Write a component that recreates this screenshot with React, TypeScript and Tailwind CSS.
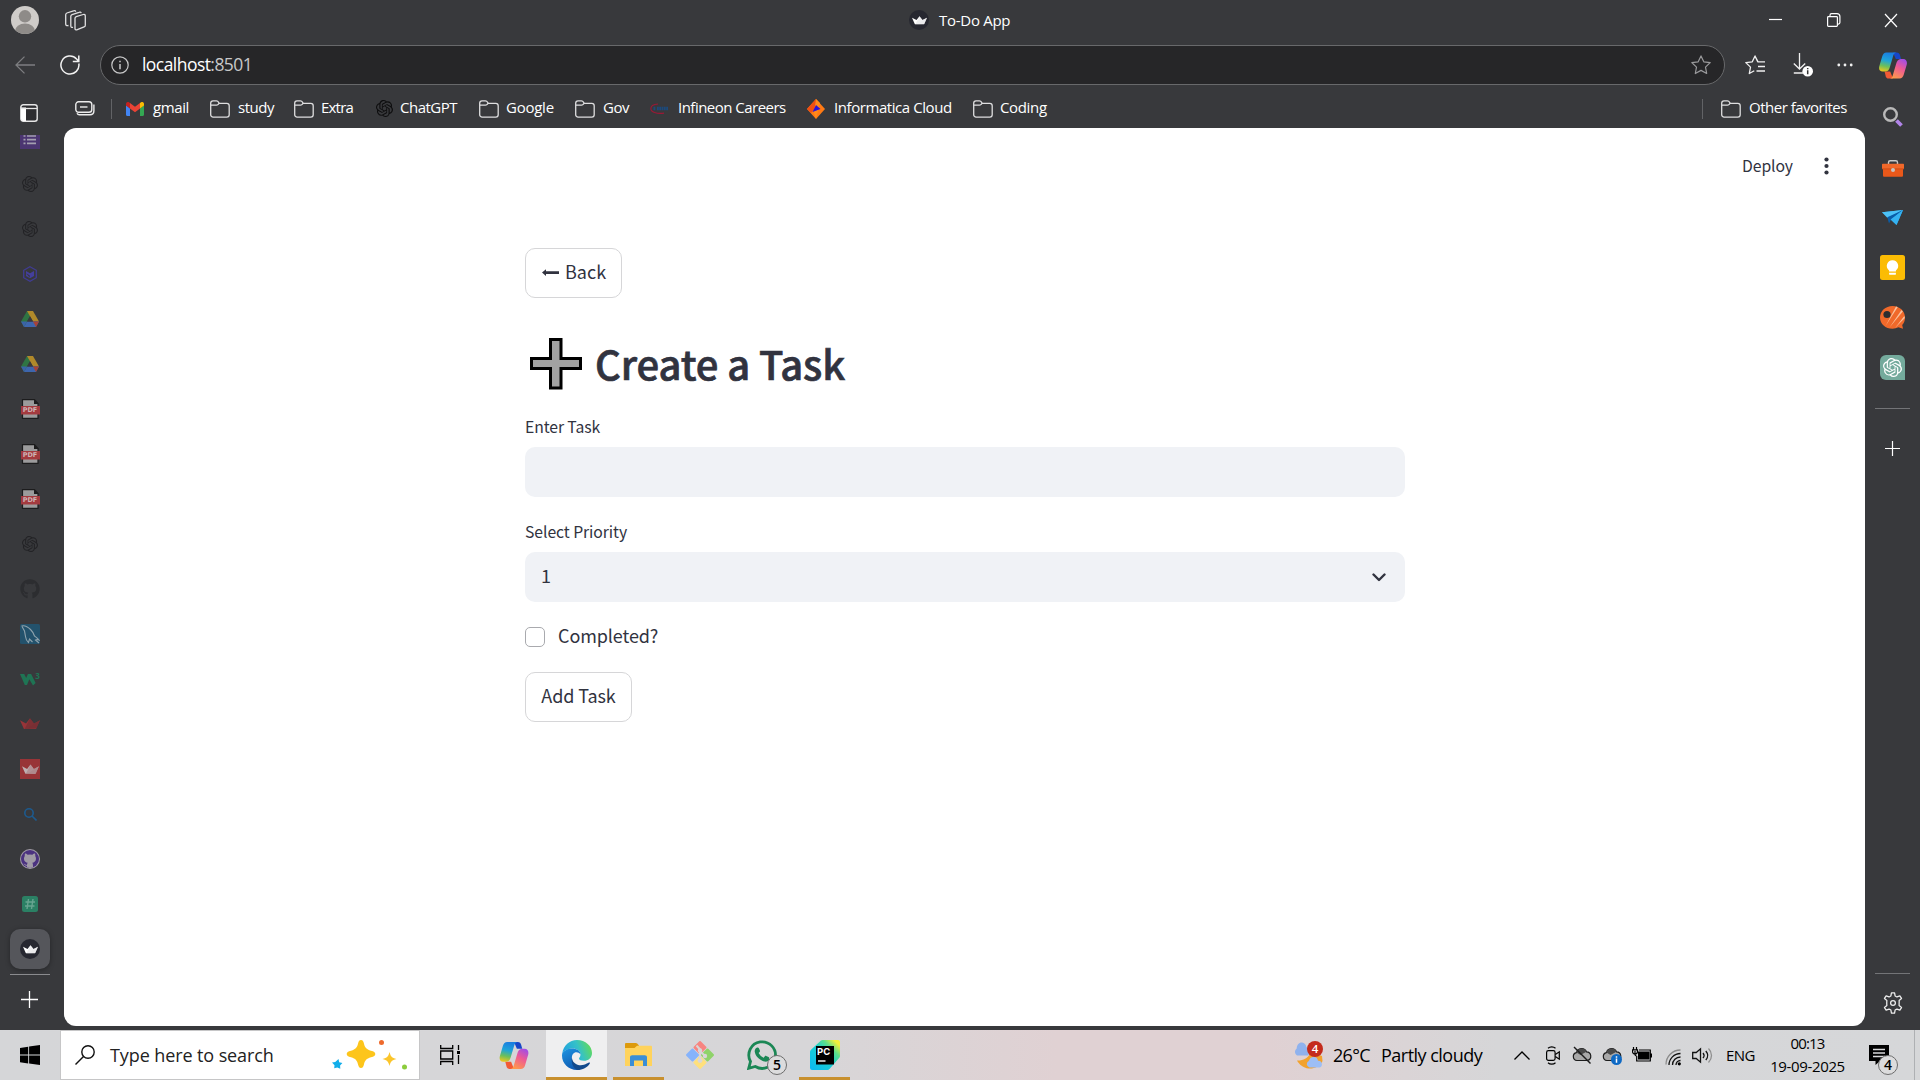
import type { ReactNode } from "react";
import { SiOpenai } from "react-icons/si";
import { FaGithub } from "react-icons/fa";

type IconProps = { className?: string };

/* ---------- shared icons ---------- */

const Folder = ({ className = "" }: IconProps) => (
  <svg className={"shrink-0 " + className} width="20" height="18" viewBox="0 0 20 18" fill="none" stroke="#dededf" strokeWidth="1.3">
    <path d="M.7 3.2A2.4 2.4 0 0 1 3 .8h3.4c.6 0 1 .2 1.4.6l1.6 1.9h7.4a2.4 2.4 0 0 1 2.4 2.4v9a2.4 2.4 0 0 1-2.4 2.4H3.1a2.4 2.4 0 0 1-2.4-2.4z" />
    <path d="M.8 5.2h5.6c.6 0 1.100-.2 1.500-.6l1.300-1.300" />
  </svg>
);

const Crown = ({ className = "", fill = "#fff", shade = "#d8d8dc" }: IconProps & { fill?: string; shade?: string }) => (
  <svg className={className} viewBox="0 0 20 12">
    <path d="M0 2.200 6 5.400 10 .2l4 5.200 6-3.100-3.700 8.200a1 1 0 0 1-.9.600H4.600a1 1 0 0 1-.9-.6z" fill={fill} />
    <path d="m10 .2 4 5.200-7.400 5.700H4.600z" fill={shade} opacity=".45" />
    <path d="m14 5.400 6-3.100-3.700 8.200-9.700.6z" fill={shade} opacity=".55" />
  </svg>
);

const Copilot = ({ className = "", id }: IconProps & { id: string }) => (
  <svg className={className} viewBox="0 0 30 28">
    <defs>
      <linearGradient id={id + "a"} x1=".4" y1="0" x2=".2" y2="1">
        <stop offset="0" stopColor="#1b7fe0" />
        <stop offset=".4" stopColor="#1fa5d8" />
        <stop offset=".7" stopColor="#6cbf5a" />
        <stop offset="1" stopColor="#f4c81a" />
      </linearGradient>
      <linearGradient id={id + "b"} x1=".8" y1="0" x2=".3" y2="1">
        <stop offset="0" stopColor="#a04de8" />
        <stop offset=".45" stopColor="#ee5a94" />
        <stop offset="1" stopColor="#ff9a4a" />
      </linearGradient>
    </defs>
    <path d="M15 0h4c2 0 2.800 1 3.300 2.600L23.600 7H18z" fill="#1746c8" />
    <path d="M15 28h-4.500c-2 0-2.800-1-3.300-2.600L6 20.500h6z" fill="#f25a35" />
    <path d="M8 0h10.500c-2 .4-2.700 1.800-3.200 3.400l-3.700 12.500c-.8 2.800-2 4.600-5 4.600H4c-3.400 0-4.600-2.700-3.600-6L3.500 4C4.300 1.400 5.600 0 8 0z" fill={`url(#${id}a)`} />
    <path d="M22 28H11.500c2-.4 2.700-1.800 3.200-3.400l3.700-12.500c.8-2.800 2-5.100 5-5.100H26c3.400 0 4.600 3.200 3.600 6.500L26.500 24c-.8 2.600-2.100 4-4.500 4z" fill={`url(#${id}b)`} />
  </svg>
);

/* ---------- title bar and toolbar ---------- */

const TitleBar = () => (
  <div className="flex h-10 shrink-0 items-center">
    <svg className="ml-[11px] size-7" viewBox="0 0 28 28">
      <clipPath id="av"><circle cx="14" cy="14" r="14" /></clipPath>
      <g clipPath="url(#av)">
        <rect width="28" height="28" fill="#cfccc9" />
        <circle cx="14" cy="10.300" r="6.200" fill="#8e8b88" />
        <ellipse cx="14" cy="25" rx="10" ry="7.500" fill="#8e8b88" />
      </g>
    </svg>
    <svg className="ml-[26px] size-[21px]" viewBox="0 0 21 21" fill="none" stroke="#e0e0e1" strokeWidth="1.300" strokeLinejoin="round">
      <path d="M10 8.300c0-.9.400-1.400 1.200-1.700l7-2.100c1.300-.4 2.100.2 2.100 1.400v9.300c0 .9-.4 1.400-1.200 1.700l-6.800 2.800c-1.400.5-2.300 0-2.300-1.300z" />
      <path d="M8 17.300c-1.500.4-2.200-.2-2.200-1.300V6.300c0-.9.400-1.400 1.200-1.700l7-2.300c1.100-.4 1.900-.1 2.200.8" />
      <path d="M3.500 15.500C1.500 16 .7 15.200.7 14V4.700c0-.9.400-1.400 1.200-1.700L8.500.9c1.100-.4 1.900-.1 2.300.7" />
    </svg>
    <div className="ml-[823px] flex size-5 items-center justify-center rounded-full bg-[#262730]">
      <Crown className="h-[9px] w-[15px]" />
    </div>
    <span className="ml-[10px] w-[71px] whitespace-nowrap text-[15px] tracking-[-0.28px]">To-Do App</span>
    <svg className="ml-[759px] h-[15px] w-[129px] shrink-0" viewBox="0 0 129 15" fill="none" stroke="#fff" strokeWidth="1.200">
      <path d="M0 6.500h13" />
      <rect x="58.600" y="3.600" width="9.800" height="9.800" rx=".8" />
      <path d="M61 3.500V2.200c0-1 .5-1.600 1.500-1.600h5.400c2 0 3 1 3 3v6c0 1-.5 1.500-1.500 1.500h-1" />
      <path d="m116 1 12 13M128 1l-12 13" />
    </svg>
  </div>
);

const Toolbar = () => (
  <div className="flex h-[50px] shrink-0 items-center">
    <svg className="ml-[15px] h-[18px] w-5" viewBox="0 0 20 18" fill="none" stroke="#7d7e81" strokeWidth="1.300">
      <path d="M20 9H1M9.500.6 1 9l8.500 8.400" />
    </svg>
    <svg className="ml-[25px] size-5" viewBox="0 0 20 20" fill="none" stroke="#f2f2f2" strokeWidth="1.500">
      <path d="M18.800 8.500A9 9 0 1 1 16.600 4l2 2.200M18.800.5v6h-6" />
    </svg>
    <div className="ml-5 flex h-10 w-[1625px] items-center rounded-full border border-[#68696b] bg-[#262628]">
      <svg className="ml-[10px] size-[18px]" viewBox="0 0 18 18" fill="none" stroke="#c9c9ca" strokeWidth="1.200">
        <circle cx="9" cy="9" r="8.200" />
        <path d="M9 8v5.200M9 4.700v1.600" strokeWidth="1.500" />
      </svg>
      <span className="-mt-[2px] ml-[13px] text-[17.5px] tracking-[-0.55px] text-[#c8c8c9]">
        <span className="text-white">localhost</span>:8501
      </span>
      <svg className="ml-auto mr-[13px] size-5" viewBox="0 0 20 20" fill="none" stroke="#9a9a9c" strokeWidth="1.200" strokeLinejoin="round">
        <path d="m10 .9 2.800 5.900 6.400.8-4.700 4.500 1.200 6.400L10 15.400l-5.700 3.100 1.200-6.400L.8 7.600l6.400-.8z" />
      </svg>
    </div>
    <svg className="ml-[20px] size-5" viewBox="0 0 20 20" fill="none" stroke="#f0f0f0" strokeWidth="1.300" strokeLinejoin="round">
      <path d="M13 6.800 10 1 7.300 6.800.8 7.600l4.700 4.500-1.200 6.400 5-2.700M10 1l2.700 5.800H20M13 11.500h7M11.500 16H20" />
    </svg>
    <svg className="ml-[28px] h-6 w-5" viewBox="0 0 20 24" fill="none" stroke="#f0f0f0" strokeWidth="1.300">
      <path d="M6.500 0v16M.8 10.500 6.500 16l5.700-5.500M.8 20H10" />
      <circle cx="14.700" cy="18.300" r="5.300" fill="#fff" stroke="none" />
      <path d="M14.700 17.300v4M14.700 14.900v1.400" stroke="#333" strokeWidth="1.500" />
    </svg>
    <svg className="ml-6 h-1 w-4" viewBox="0 0 16 4" fill="#f0f0f0">
      <circle cx="1.800" cy="2" r="1.400" /><circle cx="8" cy="2" r="1.400" /><circle cx="14.200" cy="2" r="1.400" />
    </svg>
    <Copilot id="ct" className="ml-[26px] h-[27px] w-7" />
  </div>
);

/* ---------- bookmarks ---------- */

const Bookmark = ({ icon, label, className }: { icon: ReactNode; label: string; className: string }) => (
  <div className={"flex shrink-0 items-center whitespace-nowrap " + className}>
    <span className="flex w-7 items-center">{icon}</span>
    <span className="-mt-[3px]">{label}</span>
  </div>
);

const Bookmarks = () => (
  <div className="flex h-[38px] shrink-0 items-center pb-px pl-[11px] text-[15px]">
    <svg className="h-[15px] w-5" viewBox="0 0 20 15" fill="none" stroke="#ececec" strokeWidth="1.400">
      <rect x=".8" y=".8" width="16" height="10.500" rx="2.800" />
      <path d="M5 6h7.500" />
      <path d="M18.900 3.500v6.300c0 2.600-1.500 4-4 4H4.500c-1.200 0-2-.5-2.500-1.500" />
    </svg>
    <div className="ml-4 h-5 w-px bg-[#626366]" />
    <Bookmark
      className="ml-[14px] w-[84px] tracking-[-0.4px] [&>span:first-child]:w-[27px]"
      label="gmail"
      icon={
        <svg width="18" height="14" viewBox="0 0 18 14">
          <path d="M0 3v9.800C0 13.500.5 14 1.200 14H4V6.500z" fill="#4285f4" />
          <path d="M14 14h2.800c.7 0 1.200-.5 1.200-1.200V3l-4 3.500z" fill="#34a853" />
          <path d="M14 1v5.500L18 3.500V2c0-1.900-2-2.600-3.300-1.600z" fill="#fbbc04" />
          <path d="M4 6.500V1l5 3.800L14 1v5.500l-5 3.800z" fill="#ea4335" />
          <path d="M0 2v1.500l4 3V1L3.300.4C2 -.6 0 .1 0 2z" fill="#c5221f" />
        </svg>
      }
    />
    <Bookmark className="w-[84px] tracking-[-0.48px]" label="study" icon={<Folder />} />
    <Bookmark className="w-[82px] tracking-[-0.8px] [&>span:first-child]:w-[27px]" label="Extra" icon={<Folder />} />
    <Bookmark className="w-[103px] tracking-[-0.5px] [&>span:first-child]:w-[24px]" label="ChatGPT" icon={<SiOpenai className="size-[17px] text-[#0d0d0e]" />} />
    <Bookmark className="w-[96px] tracking-[-0.25px] [&>span:first-child]:w-[27px]" label="Google" icon={<Folder />} />
    <Bookmark className="w-[75px] tracking-[-0.5px]" label="Gov" icon={<Folder />} />
    <Bookmark
      className="w-[156px] tracking-[-0.52px]"
      label="Infineon Careers"
      icon={
        <svg width="20" height="12" viewBox="0 0 20 12" fill="none">
          <path d="M8 1C3 1.400.8 3.500.8 5.700c0 3.200 5.700 5.400 13.200 4.400" stroke="#9b1836" strokeWidth="1.100" />
          <path d="M3.500 5.500h2M7 5.500h11.500" stroke="#1c4a7c" strokeWidth="3.500" strokeDasharray="1.800 .5" />
        </svg>
      }
    />
    <Bookmark
      className="w-[167px] tracking-[-0.43px]"
      label="Informatica Cloud"
      icon={
        <svg width="20" height="20" viewBox="0 0 20 20">
          <path d="M10 0 19 10 10 20 1 10z" fill="#ff7a14" />
          <path d="M10 0 1 10l4 4 5-6z" fill="#f04e12" />
          <path d="m10 0 4 4-4 16-2-6z" fill="#ff8a1c" />
          <path d="m6.500 13 3.500-7 4.500 4z" fill="#2a12d8" />
        </svg>
      }
    />
    <Bookmark className="tracking-[-0.35px] [&>span:first-child]:w-[27px]" label="Coding" icon={<Folder />} />
    <div className="ml-auto h-5 w-px bg-[#626366]" />
    <Bookmark className="ml-[18px] mr-[17px] w-[127px] tracking-[-0.5px]" label="Other favorites" icon={<Folder />} />
  </div>
);

/* ---------- vertical tabs ---------- */

const Drive = () => (
  <svg width="18" height="16" viewBox="0 0 18 16">
    <path d="M6 0h6L6.200 10.500 3 16 0 10.600z" fill="#2f7443" />
    <path d="M6 0h6l6 10.500h-6z" fill="#b0892a" />
    <path d="M0 10.600h5.800L3 16z" fill="#3a63a8" />
    <path d="M5.900 10.500H18L15 16H3z" fill="#3e66ad" />
    <path d="M12 10.500h6L15 16z" fill="#a84237" />
    <path d="m9 5.200 3.100 5.300H5.900z" fill="#39393c" />
  </svg>
);

const Pdf = () => (
  <div className="relative flex h-5 w-[19px] items-center justify-center">
    <svg className="absolute inset-0" width="19" height="20" viewBox="0 0 19 20">
      <path d="M1.500.7h12L17 4.500v14.800H1.500z" fill="#9b9b9c" stroke="#1c1c1d" strokeWidth="1.200" />
      <path d="M13 .2 17.500 5H13z" fill="#1c1c1d" />
      <path d="M0 7h19v8.500H0z" fill="#a33a3f" />
    </svg>
    <span className="relative mt-[3px] font-['DejaVu_Sans'] text-[6.5px] font-bold leading-none text-[#cfb4b6]">PDF</span>
  </div>
);

const GptDim = () => <SiOpenai className="size-4 text-[#232326]" />;

const TABS: ReactNode[] = [
  <GptDim />,
  <GptDim />,
  <svg width="14" height="16" viewBox="0 0 14 16">
    <path d="M7 .7 13.300 4.300v7.400L7 15.300.7 11.700V4.300z" fill="none" stroke="#403c92" strokeWidth="1.300" />
    <path d="m3 5 4 2.200L11 5v5l-4 2.300L3 10z" fill="#443f9c" />
    <path d="m3.500 7.800 3 1.700v1.700M9 5.200l-2 1-2-1 2-1z" fill="#38393c" stroke="#38393c" strokeWidth=".5" />
  </svg>,
  <Drive />,
  <Drive />,
  <Pdf />,
  <Pdf />,
  <Pdf />,
  <GptDim />,
  <FaGithub className="size-5 text-[#2c2d30]" />,
  <svg width="20" height="20" viewBox="0 0 20 20">
    <rect width="20" height="20" rx="1.500" fill="#23526c" />
    <path d="M1.500 2c2.500-.8 6 .5 9 3.500 2.500 2.500 3.500 4.500 4 6.500 1.300 1 3 2 4.500 4-1.500-.5-2.500-.5-3.500 0l3.500 3M2 2.500l2.500 4.500 1 5.500c.3 2.500 1 4.500 3 6l1-3.500 3 3" fill="none" stroke="#8fa3ad" strokeWidth="1.100" />
  </svg>,
  <div className="flex items-start">
    <svg width="16" height="13" viewBox="0 0 16 13" className="mt-px">
      <path d="M0 1h4.200l2 4 1.700-4h3.200l4.500 9-2.600 2.600-3.700-6.400L7 12H4.800z" fill="#1f7454" />
    </svg>
    <span className="-ml-px text-[8px] font-bold leading-[8px] text-[#1f7454]">3</span>
  </div>,
  <Crown className="h-3 w-5" fill="#983438" shade="#5e2c31" />,
  <div className="flex size-5 items-center justify-center bg-[#983437]">
    <Crown className="h-[11px] w-[17px]" fill="#bfb0b2" shade="#a36c70" />
  </div>,
  <svg width="13" height="13" viewBox="0 0 13 13" fill="none" stroke="#1d5a8e" strokeWidth="1.600">
    <circle cx="5" cy="5" r="4.200" /><path d="m8 8 4.500 4.500" />
  </svg>,
  <div className="flex size-5 items-center justify-center rounded-full bg-[#a09ba6]">
    <div className="flex size-[18px] items-center justify-center overflow-hidden rounded-full bg-[#4b3280]">
      <svg width="18" height="18" viewBox="0 0 18 18">
        <path d="M4 3.500c1 0 1.800.6 2.600 1.200a10 10 0 0 1 4.800 0c.8-.6 1.600-1.200 2.600-1.200.4 1 .4 2 .2 2.600 1.600 2.500.9 6.300-2.900 6.700.7.800.7 1.800.7 5.200H6v-2.200c-2 .3-2.500-1.300-3.300-2l1.300.2c.6 1 1.200 1 2 .8 0-.8.300-1.500.7-2-3.800-.4-4.500-4.200-2.900-6.700-.2-.6-.2-1.600.2-2.600z" fill="#a09ba6" />
      </svg>
    </div>
  </div>,
  <svg width="16" height="16" viewBox="0 0 16 16">
    <rect width="16" height="16" rx="2.500" fill="#2b8064" />
    <path d="M6.500 3 5 13M11 3 9.500 13M3.500 6h9.500M3 10h9.500" stroke="#68a490" strokeWidth="1.400" />
  </svg>,
];

const LeftSidebar = () => (
  <div className="flex w-16 shrink-0 flex-col">
    <svg className="ml-5 mt-[14px] shrink-0" width="18" height="18" viewBox="0 0 18 18">
      <rect x=".8" y=".8" width="16.400" height="16.400" rx="2.500" fill="#2d2d30" stroke="#e6e6e6" strokeWidth="1.400" />
      <path d="M1 3.500h5V17H3a2 2 0 0 1-2-2z" fill="#fff" />
      <path d="M1 4.500h16" stroke="#e6e6e6" strokeWidth="1.300" />
    </svg>
    <svg className="ml-5 mt-[13px] shrink-0" width="20" height="14" viewBox="0 0 20 14">
      <path d="M0 0h20v14H0z" fill="#4b3571" />
      <path d="M3.500 1h2M7 1h9M3.500 4.700h2M7 4.700h9M3.500 8.400h2M7 8.400h9" stroke="#a49fb0" strokeWidth="1.700" />
    </svg>
    <div className="mt-[12.500px] flex w-[60px] flex-col">
      {TABS.map((icon, i) => (
        <div key={i} className="flex h-[45px] items-center justify-center">{icon}</div>
      ))}
    </div>
    <div className="ml-[10px] mt-[2.500px] flex h-10 w-10 shrink-0 items-center justify-center rounded-[10px] bg-[#55565b] shadow-[0_1px_5px_rgba(0,0,0,0.35)]">
      <div className="flex size-5 items-center justify-center rounded-full bg-[#262730]">
        <Crown className="h-[9px] w-[15px]" />
      </div>
    </div>
    <div className="ml-[10px] mt-[5px] h-px w-10 shrink-0 bg-[#8a8b8e]" />
    <svg className="ml-[21px] mt-4 shrink-0" width="17" height="17" viewBox="0 0 17 17" stroke="#fff" strokeWidth="1.300">
      <path d="M8.500 0v17M0 8.500h17" />
    </svg>
  </div>
);

/* ---------- right sidebar ---------- */

const RightSidebar = () => (
  <div className="flex w-[55px] shrink-0 flex-col items-center pt-[17px]">
    <svg width="20" height="20" viewBox="0 0 20 20" fill="none">
      <path d="m13.500 13.500 5 5" stroke="#b184e8" strokeWidth="3.800" />
      <circle cx="7.500" cy="7.500" r="6.300" stroke="#b9b9b9" strokeWidth="2.400" />
    </svg>
    <svg className="mt-[33px]" width="22" height="17" viewBox="0 0 22 17">
      <path d="M6.500 4V2.500C6.500 1.300 7 .8 8.200.8h5.600c1.200 0 1.700.5 1.700 1.700V4" fill="none" stroke="#c9c9c9" strokeWidth="1.400" />
      <path d="M1 3.800h20c.6 0 1 .4 1 1V9H0V4.800c0-.6.400-1 1-1z" fill="#f0682a" />
      <path d="M1 9h20v6.500c0 .8-.5 1.300-1.300 1.300H2.300C1.500 16.800 1 16.300 1 15.500z" fill="#e9581a" />
      <path d="M0 8.500h22v.8H0z" fill="#c9470f" />
      <circle cx="11" cy="10" r="2" fill="#c8c3c0" />
    </svg>
    <svg className="mt-[33px]" width="21" height="15" viewBox="0 0 21 15">
      <path d="M0 2.200 21 0l-6.500 15-5-4.700z" fill="#25a5ea" />
      <path d="M0 2.200 21 0 5.500 8z" fill="#4cc2f7" />
      <path d="M5.300 7.200 21 0 8.800 10 7 13.500z" fill="#0a5da8" />
      <path d="M21 0 8.600 9.500 14.500 15z" fill="#35b2f1" />
    </svg>
    <svg className="mt-[30px]" width="25" height="25" viewBox="0 0 25 25">
      <rect width="25" height="25" rx="2.500" fill="#fbbc04" />
      <path d="M12.500 5.300a5.600 5.600 0 0 1 3.400 10.100v1H9.100v-1a5.600 5.600 0 0 1 3.400-10.100zM9.100 17.700h6.800v1.500c0 .3-.2.500-.5.500H9.600c-.3 0-.5-.2-.5-.5z" fill="#fff" />
    </svg>
    <svg className="mt-[26px]" width="25" height="23" viewBox="0 0 25 23">
      <path d="M12.500 0C19.500 0 25 5 25 11.500c0 3-1 5.500-2.800 7.500l.8 3.800-4.500-1.500a13 13 0 0 1-6 1.500C5.500 22.800 0 18 0 11.500S5.500 0 12.500 0z" fill="#f0692a" />
      <path d="M5.500 20 16 .5l1.800.6zM9.500 21.500 21.500 4l1.300 1.400zM15 22 24.300 10l.6 2z" fill="#fbc09a" />
      <circle cx="7" cy="8.500" r="3.600" fill="#2d2d30" />
    </svg>
    <div className="mt-[26px] flex size-[25px] items-center justify-center rounded-[6px] rounded-br-none bg-[#74aa9c]">
      <SiOpenai className="size-[19px] text-white" />
    </div>
    <div className="mt-7 h-px w-[35px] shrink-0 bg-[#737477]" />
    <svg className="mt-8 shrink-0" width="15" height="15" viewBox="0 0 15 15" stroke="#fff" strokeWidth="1.200">
      <path d="M7.500 0v15M0 7.500h15" />
    </svg>
    <div className="mt-auto h-px w-[35px] shrink-0 bg-[#737477]" />
    <svg className="mb-4 mt-[18px] shrink-0" width="22" height="22" viewBox="0 0 24 24" fill="none" stroke="#ececec" strokeWidth="1.400" strokeLinejoin="round">
      <path d="M10.300 1h3.400l.6 3.300 2 1.100 3.200-1.200L21.300 7l-2.600 2.200c.2 2-.2 3.600 0 5.600l2.600 2.200-1.800 2.800-3.200-1.200-2 1.100-.6 3.300h-3.400l-.6-3.300-2-1.100-3.200 1.200L2.700 17l2.600-2.200c-.2-2-.2-3.600 0-5.600L2.700 7l1.800-2.800 3.200 1.200 2-1.100z" />
      <circle cx="12" cy="12" r="2.600" />
    </svg>
  </div>
);

/* ---------- page ---------- */

const Page = () => (
  <main className="flex min-h-0 flex-1 flex-col rounded-[12px] bg-white font-['Noto_Sans_CJK_SC',sans-serif] text-[#31333f]">
    <header className="flex h-[75px] shrink-0 items-center justify-end">
      <span className="text-[15.75px] tracking-[-0.08px]">Deploy</span>
      <svg className="ml-[31px] mr-[36px]" width="5" height="18" viewBox="0 0 5 18" fill="#31333f">
        <circle cx="2.500" cy="2.500" r="2.100" /><circle cx="2.500" cy="9" r="2.100" /><circle cx="2.500" cy="15.500" r="2.100" />
      </svg>
    </header>
    <div className="ml-[461px] mt-[45px] flex w-[880px] flex-col items-start">
      <button className="flex h-[50px] w-[97px] items-center rounded-[10px] border border-[#d6d6d8] pb-[3px] pl-4 text-[18px]">
        <svg className="mt-px" width="17" height="7" viewBox="0 0 17 7">
          <path d="M0 3.500 4 .2v2h13v2.700H4v2z" fill="#31333f" />
        </svg>
        <span className="ml-[6px]">Back</span>
      </button>
      <h1 className="mt-[31px] flex h-[68px] items-center text-[40px] font-medium leading-none tracking-[-0.1px]">
        <svg className="ml-[5px] mt-[2px]" width="52" height="52" viewBox="0 0 52 52">
          <path d="M20.500 1.500h10.500v19h19.500v10H31v19.500H20.500V30.500H1.500v-10h19z" fill="#a2a2a2" stroke="#000" strokeWidth="3" />
        </svg>
        <span className="ml-[13px] [-webkit-text-stroke:0.7px_#31333f]">Create a Task</span>
      </h1>
      <label className="mt-[18px] h-[32px] text-[15.75px] leading-[24px] tracking-[-0.1px]">Enter Task</label>
      <div className="h-[50px] w-full rounded-[10px] bg-[#f0f2f6]" />
      <label className="mt-[23px] h-[32px] text-[15.75px] leading-[24px] tracking-[-0.07px]">Select Priority</label>
      <div className="flex h-[50px] w-full items-center justify-between rounded-[10px] bg-[#f0f2f6] pl-[16px] pr-[19px] text-[18px]">
        <span className="-mt-[3px]">1</span>
        <svg width="14" height="9" viewBox="0 0 14 9" fill="none" stroke="#31333f" strokeWidth="2.400" strokeLinecap="round" strokeLinejoin="round">
          <path d="m1.500 1.500 5.500 5.500 5.500-5.500" />
        </svg>
      </div>
      <label className="mt-[25px] flex h-5 items-center text-[18px]">
        <span className="size-5 rounded-[5px] border border-[#a9aaae]" />
        <span className="-mt-[3px] ml-[13px] tracking-[-0.1px]">Completed?</span>
      </label>
      <button className="mt-[25px] flex h-[50px] w-[107px] items-center justify-center rounded-[10px] border border-[#d6d6d8] pb-[3px] text-[18px] tracking-[-0.1px]">
        Add Task
      </button>
    </div>
  </main>
);

/* ---------- taskbar ---------- */

const Badge = ({ children, className = "" }: { children: ReactNode; className?: string }) => (
  <span className={"absolute flex size-5 items-center justify-center rounded-full border border-[#6d6d6d] bg-[#dcdcdd] text-[14px] font-semibold leading-none text-black " + className}>
    {children}
  </span>
);

const Cloud = ({ children }: { children: ReactNode }) => (
  <svg className="mt-[2px] shrink-0" width="20" height="20" viewBox="0 0 20 20" fill="none">
    <path d="M5 14.500a4 4 0 0 1-.5-7.900 5.300 5.300 0 0 1 10-.8 4.400 4.400 0 0 1 .8 8.700z" fill="#a8a8a8" stroke="#1c1c1c" strokeWidth="1.200" />
    <path d="M4.500 6.600a5.300 5.300 0 0 1 10-.8L8.500 9z" fill="#4a4a4a" />
    {children}
  </svg>
);

const Taskbar = () => (
  <div className="flex h-[50px] shrink-0 items-center bg-[linear-gradient(90deg,#d5d6d8_0%,#d7d6d8_42%,#e0d1d3_55%,#e0d1d3_66%,#d6d6d8_78%,#d6d7d9_100%)] text-black">
    <svg className="ml-5 shrink-0" width="20" height="20" viewBox="0 0 20 20">
      <path d="M0 2.900 8.200 1.700v7.900H0zM9.100 1.600 20 0v9.500H9.100zM0 10.500h8.200v7.900L0 17.200zM9.100 10.500H20V20L9.100 18.500z" />
    </svg>
    <div className="ml-[20px] flex h-[50px] w-[360px] shrink-0 items-center border border-[#c6c6c7] bg-white">
      <svg className="ml-[14px]" width="20" height="20" viewBox="0 0 20 20" fill="none" stroke="#111" strokeWidth="1.400">
        <circle cx="13" cy="7" r="6.200" /><path d="M8.500 11.500.5 19.500" />
      </svg>
      <span className="ml-[15px] w-[164px] whitespace-nowrap text-[18px] tracking-[-0.1px] text-[#222]">Type here to search</span>
      <svg className="ml-[57px]" width="76" height="32" viewBox="0 0 76 32">
        <path d="M30 1c1.600 0 2.300 1 2.800 3 1 4.500 2.500 6.300 7.200 7.700 3 .8 4.300 1.600 4.300 3.300s-1.300 2.500-4.300 3.300c-4.700 1.400-6.200 3.200-7.200 7.700-.5 2-1.200 3-2.800 3s-2.300-1-2.800-3c-1-4.500-2.500-6.300-7.200-7.700-3-.8-4.300-1.600-4.300-3.300s1.300-2.500 4.300-3.300c4.700-1.400 6.200-3.200 7.200-7.700.5-2 1.200-3 2.800-3z" fill="#fdc51b" />
        <path d="M58.500 13c1.300 4.800 2.200 5.700 7 7-4.800 1.300-5.700 2.200-7 7-1.300-4.800-2.200-5.700-7-7 4.800-1.300 5.700-2.200 7-7z" fill="#fbc52b" />
        <path d="m7.500 20 .7 3.200 3.200.8-2.300 2.500.2 3.300-3-1.300-3.100.8.300-3.100L1 23.600l3.200-.6z" fill="#12aeea" />
        <circle cx="50.500" cy="3.500" r="2.500" fill="#ee6a2c" />
        <circle cx="73.500" cy="28" r="2.500" fill="#8ccc3c" />
      </svg>
    </div>
    <svg className="ml-[20px] shrink-0" width="21" height="20" viewBox="0 0 21 20" fill="none" stroke="#000" strokeWidth="1.300">
      <path d="M.7 0v3.500h12V0M.7 20v-3.500h12V20M.7 6h12v8H.7zM18.500 0v5M18.500 10v9" />
      <path d="M17 6h3v3h-3z" fill="#000" stroke="none" />
    </svg>
    <Copilot id="cb" className="ml-[38px] h-[27px] w-[30px] shrink-0" />
    <div className="ml-[17px] flex h-full w-[61px] shrink-0 items-center justify-center border-b-[3px] border-[#c8902e] bg-[#efeff0] pt-[3px]">
      <svg width="30" height="30" viewBox="0 0 30 30">
        <defs>
          <linearGradient id="e1" x1="0" y1=".6" x2="1" y2=".3">
            <stop offset="0" stopColor="#1f9fe0" /><stop offset=".55" stopColor="#35c1c8" /><stop offset="1" stopColor="#63dc55" />
          </linearGradient>
          <linearGradient id="e2" x1=".1" y1="0" x2=".6" y2="1">
            <stop offset="0" stopColor="#1c92e0" /><stop offset="1" stopColor="#0f58b0" />
          </linearGradient>
        </defs>
        <path d="M.3 13.500C1.300 5.500 7.500 0 15 0c8.500 0 15 6 15 13 0 5-3.800 7.800-8 7.800-3 0-5-1-5-2.300 0-1 1.500-1.300 1.500-4C18.500 11 15 8.600 10.500 8.600c-5 0-8.500 2.400-10.200 4.900z" fill="url(#e1)" />
        <path d="M.2 13.500c1.700-2.700 5.200-4.900 9.800-4.900 4.800 0 8.500 2.300 8.500 5.900-1-1.600-2.500-2.300-4-2.300-3 0-4.700 2.700-4.700 5.800 0 5.300 5 9 10.200 9-1 1.500-2.500 3-5 3C6.500 30 0 23.500 0 15.500z" fill="url(#e2)" />
        <path d="M9.900 17c0 6.500 6.600 9.500 12 7.800 2-.6 4-1.800 5-2.300.8-.3 1.300.3.900 1C25.500 27.500 20.500 30 15.500 30 10.500 28 9 22 9.900 17z" fill="#124a8c" />
      </svg>
    </div>
    <div className="ml-[6px] flex h-full w-[51px] shrink-0 items-center justify-center border-b-[3px] border-[#c8902e] pt-[2px]">
      <svg width="27" height="23" viewBox="0 0 27 23">
        <path d="M0 1.200C0 .5.500 0 1.200 0h9.600c.6 0 1 .2 1.400.6L14 2.500V8H0z" fill="#dd9a0c" />
        <path d="M0 5h9.500l2.500-2.300h13.800c.7 0 1.200.5 1.200 1.200V23H0z" fill="#ffd35c" />
        <path d="M5 23V14.500c0-1.500.8-2.300 2.300-2.300h12.400c1.500 0 2.300.8 2.300 2.300V23h-4v-5.500H9V23z" fill="#3a8ed6" />
      </svg>
    </div>
    <svg className="ml-[21px] shrink-0" width="30" height="30" viewBox="0 0 30 30">
      <g transform="rotate(45 15 15)">
        <rect x="4.800" y="4.800" width="9.800" height="9.800" rx="1" fill="#f78580" />
        <rect x="15.400" y="4.800" width="9.800" height="9.800" rx="1" fill="#8fd36a" />
        <rect x="4.800" y="15.400" width="9.800" height="9.800" rx="1" fill="#86b3fb" />
        <rect x="15.400" y="15.400" width="9.800" height="9.800" rx="1" fill="#ffe07c" />
      </g>
      <path d="m11.500 5.500 3.500 4V21M15 11l5 5" fill="none" stroke="#d9d6d8" strokeWidth="2" />
      <circle cx="15" cy="10.500" r="2.200" fill="#d9d6d8" /><circle cx="15" cy="20.500" r="2.400" fill="#d9d6d8" /><circle cx="20" cy="16" r="2.200" fill="#d9d6d8" />
    </svg>
    <div className="relative ml-8 size-[30px] shrink-0">
      <svg width="30" height="30" viewBox="0 0 30 30">
        <path d="M1.700 28.300 3.500 21.500A13.300 13.300 0 1 1 8.300 26.500z" fill="none" stroke="#1b8755" strokeWidth="2.800" />
        <path d="M10.200 7.500c.7-.2 1.400 0 1.700.7l1 2.300c.2.500.1 1-.3 1.400l-1 1.200a9.500 9.500 0 0 0 5 4.600l1.300-1.500c.4-.4.800-.5 1.300-.3l2.300 1.200c.6.300.9.700.8 1.300-.3 2.400-2.300 3.600-4.600 3.200-5-1-9.500-5.500-10-10-.1-2 1-3.700 2.500-4.100z" fill="#1b8755" />
      </svg>
      <Badge className="left-[20px] top-[15px]">5</Badge>
    </div>
    <div className="ml-[22px] flex h-full w-[51px] shrink-0 items-center justify-center border-b-[3px] border-[#c8902e] pt-[3px]">
      <div className="relative size-[30px]">
        <svg width="30" height="30" viewBox="0 0 30 30">
          <defs>
            <linearGradient id="pc" x1="0" y1="1" x2="1" y2="0">
              <stop offset="0" stopColor="#0ab8f4" /><stop offset=".5" stopColor="#19cfd0" /><stop offset=".72" stopColor="#5ee08a" /><stop offset=".9" stopColor="#f2f03a" />
            </linearGradient>
          </defs>
          <path d="M11 .5C11.500.2 12 0 12.500 0H28a2 2 0 0 1 2 2v14c0 .7-.2 1.200-.7 1.700L19.500 29a3 3 0 0 1-2 1H2a2 2 0 0 1-2-2V12c0-1 .3-1.700 1-2.200z" fill="url(#pc)" />
          <path d="M6 6h18v18.500H6z" fill="#000" /><path d="M8 21h7.500" stroke="#fff" strokeWidth="1.400" />
        </svg>
        <span className="absolute left-[7.500px] top-[7px] font-['Inter'] text-[9.500px] font-bold leading-[10px] text-white">PC</span>
      </div>
    </div>

    <div className="relative ml-auto h-[27px] w-[30px] shrink-0">
      <svg width="30" height="27" viewBox="0 0 30 27">
        <path d="M17 11.500c4 1 9 1 12 2.500l.5 5c-2 5-8 8-14 7.500-5-.5-9.500-4-11.500-8 5 .5 11-2 13-7z" fill="#f2a22e" />
        <path d="M4 13.500a4.200 4.200 0 0 1-.3-7C3.800 3 6 .3 9 .5c2.500.2 4 2 4.300 4.500 2.500 1 3.700 4.500 2 8.500z" fill="#8fb2ee" />
        <path d="M16.500 25.500a3.600 3.600 0 0 1-.5-6.800c.6-2.500 2.500-4 5-3.700 2.300.2 3.700 1.500 4 3.700a3.500 3.500 0 0 1 1.500 6.800z" fill="#9dbef5" />
      </svg>
      <span className="absolute -top-px right-0 flex size-[16px] items-center justify-center rounded-full bg-[#c42b1c] text-[11.500px] font-semibold leading-none text-white">4</span>
    </div>
    <span className="ml-[10px] w-[38px] shrink-0 whitespace-nowrap text-[18px] tracking-[-0.7px]">26°C</span>
    <span className="ml-[10px] w-[101px] shrink-0 whitespace-nowrap text-[18px] tracking-[-0.52px]">Partly cloudy</span>
    <svg className="ml-[32px] shrink-0" width="16" height="9" viewBox="0 0 16 9" fill="none" stroke="#000" strokeWidth="1.300">
      <path d="m.5 8.500 7.500-7.500 7.500 7.500" />
    </svg>
    <svg className="ml-4 shrink-0" width="14" height="19" viewBox="0 0 14 19" fill="none" stroke="#000" strokeWidth="1.200">
      <rect x=".6" y="4.600" width="8.500" height="9.800" rx="1.800" />
      <path d="m9.300 8.500 4-2.700v7.400l-4-2.700M2 2.200C4 .4 7.500.4 9.500 2.200M2 16.800c2 1.800 5.500 1.800 7.500 0" />
    </svg>
    <div className="ml-3 flex">
      <Cloud><path d="m2 1 16.500 16.500" stroke="#1c1c1c" strokeWidth="1.400" /></Cloud>
    </div>
    <div className="ml-[10px] flex">
      <Cloud>
        <circle cx="14.500" cy="13.500" r="5.500" fill="#0e69c4" />
        <path d="M14.500 12.500v4.200M14.500 10.200v1.500" stroke="#fff" strokeWidth="1.500" />
      </Cloud>
    </div>
    <svg className="ml-[10px] shrink-0" width="20" height="16" viewBox="0 0 20 16">
      <path d="M6 4.500h11.500v8H6z" />
      <path d="M7 3h11.300v11H4.700V9M19.500 6.500v4M3 4V7.500c0 1 .7 1.500 1.700 1.500M1.500 0v2.500M4.500 0v2.500M.5 2.800h5v1.700a2.500 2.500 0 0 1-5 0z" fill="none" stroke="#000" strokeWidth="1.200" />
    </svg>
    <svg className="ml-[13px] mt-1 shrink-0" width="17" height="17" viewBox="0 0 17 17" fill="none" strokeWidth="1.300">
      <path d="M1 15.500C1 7.500 7.500 1 15.500 1" stroke="#8a8a8a" />
      <path d="M4 16C4 9.700 9.200 4.500 15.500 4.500M7.500 16c0-4.500 3.600-8 8-8M11 16c0-2.500 2-4.500 4.500-4.500" stroke="#111" />
      <circle cx="14.300" cy="14.800" r="1.600" fill="#000" />
    </svg>
    <svg className="ml-[10px] shrink-0" width="21" height="17" viewBox="0 0 21 17" fill="none" stroke="#111" strokeWidth="1.300">
      <path d="M.7 5.500h3.500L8.500 1.800v13.400L4.200 11.500H.7zM11 6c1.300 1.500 1.300 3.500 0 5M13.800 4c2.300 2.700 2.300 6.300 0 9" />
      <path d="M16.500 1.500c4 4 4 10 0 14" stroke="#8f8f8f" />
    </svg>
    <span className="ml-[13px] w-[29px] shrink-0 text-[15px] tracking-[-0.6px]">ENG</span>
    <div className="ml-[15px] flex w-[75px] shrink-0 flex-col items-center whitespace-nowrap text-[15px] leading-[23px]">
      <span className="tracking-[-0.8px]">00:13</span>
      <span className="tracking-[-0.36px]">19-09-2025</span>
    </div>
    <div className="relative ml-[24px] h-5 w-5 shrink-0">
      <svg width="20" height="20" viewBox="0 0 20 20">
        <path d="M0 0h20v16h-9l-4.500 4v-4H0z" /><path d="M4 4.500h12M4 8h12M4 11.500h12" stroke="#d8d8da" strokeWidth="1.300" />
      </svg>
      <Badge className="left-[9px] top-[10px]">4</Badge>
    </div>
    <div className="ml-[25px] mr-[5px] h-full w-px shrink-0 bg-[#aeb0b3]" />
  </div>
);

export default function App() {
  return (
    <div className="flex h-[1080px] w-[1920px] flex-col overflow-hidden bg-[#38393c] font-['Open_Sans',sans-serif] text-white">
      <TitleBar />
      <Toolbar />
      <div className="flex min-h-0 flex-1">
        <LeftSidebar />
        <div className="mb-[4px] flex w-[1801px] shrink-0 flex-col">
          <Bookmarks />
          <Page />
        </div>
        <RightSidebar />
      </div>
      <Taskbar />
    </div>
  );
}
